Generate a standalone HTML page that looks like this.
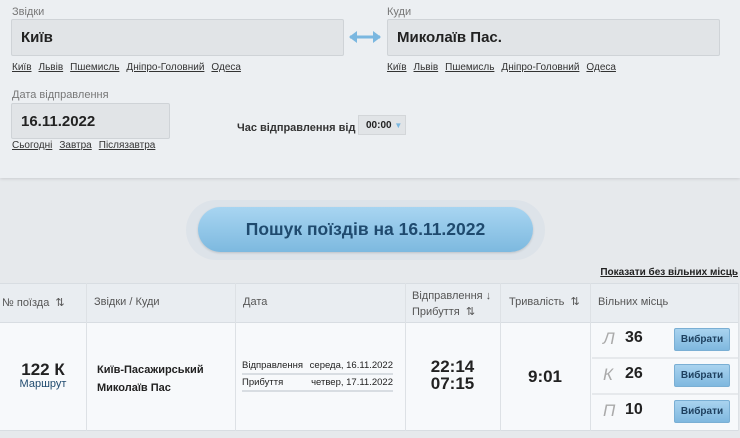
<!DOCTYPE html>
<html><head><meta charset="utf-8"><style>
*{margin:0;padding:0;box-sizing:border-box}
body{width:740px;height:438px;overflow:hidden;background:#e6e9ec;font-family:"Liberation Sans",sans-serif;color:#222;position:relative}
.abs{position:absolute}
.top{left:0;top:0;width:740px;height:178px;background:#eceff2;box-shadow:0 1px 3px rgba(0,0,0,.12)}
.lbl{font-size:11px;color:#777}
.inp{background:#e1e4e7;border:1px solid #cfd3d7;border-radius:2px;font-size:15px;font-weight:bold;color:#222;padding-left:9px;display:flex;align-items:center}
.links{font-size:10px;color:#333}
.links span{text-decoration:underline;margin-right:7px}
.hd{font-size:11px;color:#555}
.btn{width:56px;height:23px;background:linear-gradient(#a9d3ef,#7fb8df);border:1px solid #7aafd4;border-radius:2px;color:#1d3f5e;font-size:10px;font-weight:bold;display:flex;align-items:center;justify-content:center}
</style></head><body>
<div class="abs top"></div>
<div class="abs lbl" style="left:12px;top:6px">Звідки</div>
<div class="abs inp" style="left:11px;top:19px;width:333px;height:37px">Київ</div>
<svg class="abs" style="left:348px;top:30px" width="34" height="14"><path d="M2 7 H32" stroke="#7ab7e0" stroke-width="3"/><path d="M1 7 L9 1 V13Z M33 7 L25 1 V13Z" fill="#7ab7e0"/></svg>
<div class="abs lbl" style="left:387px;top:6px">Куди</div>
<div class="abs inp" style="left:387px;top:19px;width:333px;height:37px">Миколаїв Пас.</div>
<div class="abs links" style="left:12px;top:62px"><span>Київ</span><span>Львів</span><span>Пшемисль</span><span>Дніпро-Головний</span><span>Одеса</span></div>
<div class="abs links" style="left:387px;top:62px"><span>Київ</span><span>Львів</span><span>Пшемисль</span><span>Дніпро-Головний</span><span>Одеса</span></div>
<div class="abs lbl" style="left:12px;top:89px">Дата відправлення</div>
<div class="abs inp" style="left:11px;top:103px;width:159px;height:36px">16.11.2022</div>
<div class="abs links" style="left:12px;top:140px"><span>Сьогодні</span><span>Завтра</span><span>Післязавтра</span></div>
<div class="abs" style="left:237px;top:122px;font-size:11px;font-weight:bold;color:#333">Час відправлення від</div>
<div class="abs" style="left:358px;top:115px;width:48px;height:20px;background:#e1e4e7;border:1px solid #d3d6d9;font-size:10px;font-weight:bold;padding:4px 0 0 7px">00:00 <span style="color:#7ab7e0;font-size:8px">▼</span></div>
<div class="abs" style="left:186px;top:200px;width:359px;height:60px;border-radius:30px;background:#dde3e9"></div>
<div class="abs" style="left:198px;top:207px;width:335px;height:45px;border-radius:23px;background:linear-gradient(#a8d5f1,#7db9df);box-shadow:0 1px 2px rgba(0,0,0,.15);display:flex;align-items:center;justify-content:center;font-size:17.5px;font-weight:bold;color:#1f4a6e">Пошук поїздів на 16.11.2022</div>
<div class="abs" style="right:2px;top:267px;font-size:10px;font-weight:bold;text-decoration:underline;color:#222">Показати без вільних місць</div>
<div class="abs" style="left:0;top:283px;width:738px;height:40px;background:#e9edf1;border-top:1px solid #d8dde2;border-bottom:1px solid #d8dde2"></div>
<div class="abs" style="left:0;top:323px;width:738px;height:108px;background:#f7f9fb;border-bottom:1px solid #d8dde2"></div>
<div class="abs" style="left:86px;top:283px;width:1px;height:148px;background:#dde1e5"></div>
<div class="abs" style="left:235px;top:283px;width:1px;height:148px;background:#dde1e5"></div>
<div class="abs" style="left:405px;top:283px;width:1px;height:148px;background:#dde1e5"></div>
<div class="abs" style="left:500px;top:283px;width:1px;height:148px;background:#dde1e5"></div>
<div class="abs" style="left:590px;top:283px;width:1px;height:148px;background:#dde1e5"></div>
<div class="abs" style="left:738px;top:283px;width:1px;height:148px;background:#dde1e5"></div>
<div class="abs" style="left:592px;top:357px;width:146px;height:2px;background:#e6e9ec"></div>
<div class="abs" style="left:592px;top:393px;width:146px;height:2px;background:#e6e9ec"></div>
<div class="abs hd" style="left:2px;top:296px">№ поїзда &nbsp;⇅</div>
<div class="abs hd" style="left:94px;top:296px">Звідки / Куди</div>
<div class="abs hd" style="left:243px;top:296px">Дата</div>
<div class="abs hd" style="left:412px;top:288px;line-height:16px">Відправлення ↓<br>Прибуття &nbsp;⇅</div>
<div class="abs hd" style="left:509px;top:295px">Тривалість &nbsp;⇅</div>
<div class="abs hd" style="left:598px;top:296px">Вільних місць</div>
<div class="abs" style="left:0;top:360px;width:86px;text-align:center;font-size:17px;font-weight:bold">122 К</div>
<div class="abs" style="left:0;top:378px;width:86px;text-align:center;font-size:11px;color:#1f4a6e">Маршрут</div>
<div class="abs" style="left:97px;top:361px;font-size:11px;font-weight:bold;line-height:18px">Київ-Пасажирський<br>Миколаїв Пас</div>
<div class="abs" style="left:242px;top:360px;width:151px;font-size:9.5px;border-bottom:2px solid #d8dde2;padding-bottom:2px;display:flex;justify-content:space-between"><span>Відправлення</span><span>середа, 16.11.2022</span></div>
<div class="abs" style="left:242px;top:377px;width:151px;font-size:9.5px;border-bottom:2px solid #d8dde2;padding-bottom:2px;display:flex;justify-content:space-between"><span>Прибуття</span><span>четвер, 17.11.2022</span></div>
<div class="abs" style="left:405px;top:358px;width:95px;text-align:center;font-size:17px;font-weight:bold;line-height:17px">22:14<br>07:15</div>
<div class="abs" style="left:500px;top:367px;width:90px;text-align:center;font-size:17px;font-weight:bold">9:01</div>
<div class="abs" style="left:603px;top:329px;font-size:17px;font-style:italic;color:#aaa">Л</div><div class="abs" style="left:625px;top:329px;font-size:16px;font-weight:bold">36</div>
<div class="abs" style="left:603px;top:365px;font-size:17px;font-style:italic;color:#aaa">К</div><div class="abs" style="left:625px;top:365px;font-size:16px;font-weight:bold">26</div>
<div class="abs" style="left:603px;top:401px;font-size:17px;font-style:italic;color:#aaa">П</div><div class="abs" style="left:625px;top:401px;font-size:16px;font-weight:bold">10</div>
<div class="abs btn" style="left:674px;top:328px">Вибрати</div>
<div class="abs btn" style="left:674px;top:364px">Вибрати</div>
<div class="abs btn" style="left:674px;top:400px">Вибрати</div>
</body></html>
